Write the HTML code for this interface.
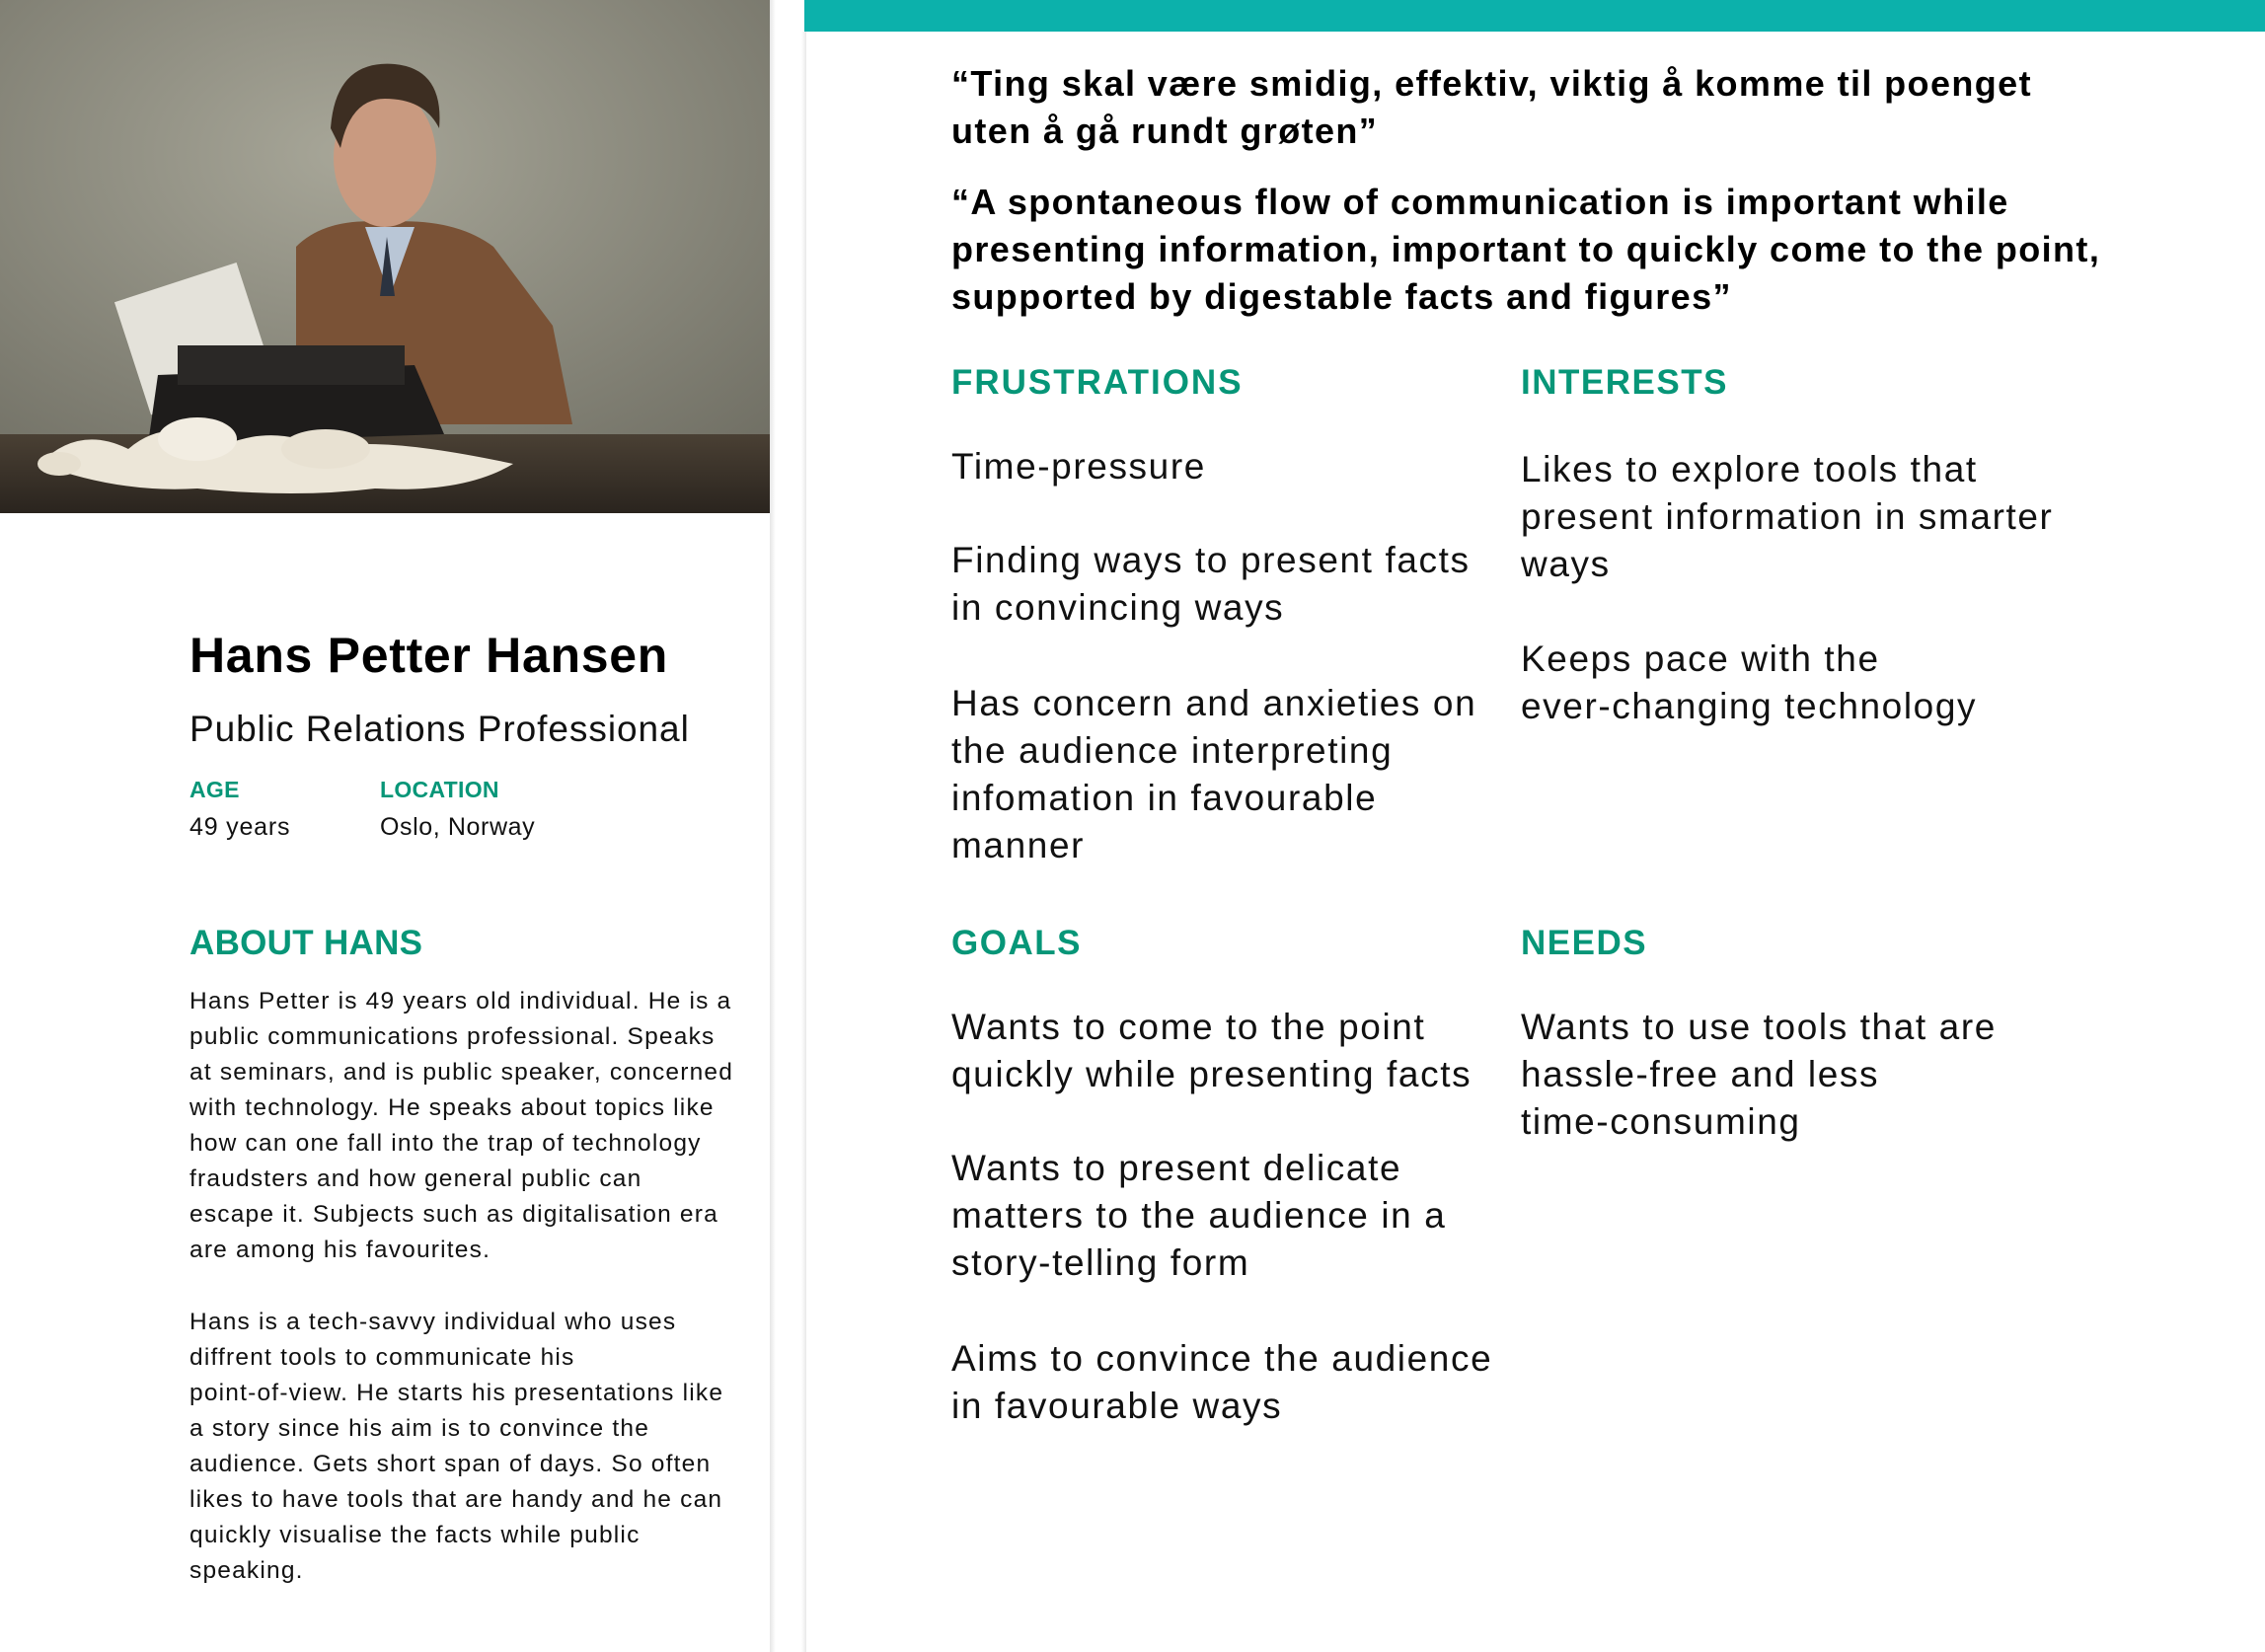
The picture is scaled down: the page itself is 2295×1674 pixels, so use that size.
<!DOCTYPE html>
<html><head><meta charset="utf-8"><style>
*{margin:0;padding:0;box-sizing:border-box}
body{width:2295px;height:1674px;background:#fff;position:relative;overflow:hidden;font-family:"Liberation Sans",sans-serif;color:#111}
.l{position:absolute;white-space:nowrap}
.shadow{position:absolute;left:780px;top:0;width:6px;height:1674px;background:linear-gradient(90deg,#e6e6e6,#fff)}
.shadow2{position:absolute;left:812px;top:32px;width:5px;height:1642px;background:linear-gradient(90deg,#fff,#e8e8e8)}
.bar{position:absolute;left:815px;top:0;width:1480px;height:32px;background:#0cb1ab}
.h{color:#079678;font-weight:bold;font-size:35px;line-height:40px;letter-spacing:0.3px}
.q{font-weight:bold;font-size:36px;line-height:48px;color:#000;letter-spacing:1.4px}
.it{font-size:37px;line-height:48px;color:#111;letter-spacing:1.6px}
.b{font-size:24.5px;line-height:36px;color:#111;letter-spacing:1.2px}
</style></head><body>
<svg class="l" style="left:0;top:0" width="780" height="520" viewBox="0 0 780 520">
<defs><radialGradient id="bg" cx="0.45" cy="0.3" r="0.8"><stop offset="0" stop-color="#a7a698"/><stop offset="1" stop-color="#6f6e63"/></radialGradient>
<linearGradient id="tb" x1="0" y1="0" x2="0" y2="1"><stop offset="0" stop-color="#4a4034"/><stop offset="1" stop-color="#2a241e"/></linearGradient></defs>
<rect width="780" height="520" fill="url(#bg)"/>
<rect y="440" width="780" height="80" fill="url(#tb)"/>
<path d="M300 250 Q330 220 390 225 Q460 220 500 250 L560 330 L580 430 L300 430 Z" fill="#7a5236"/>
<path d="M370 230 L395 300 L420 230 Z" fill="#b9c6d6"/>
<path d="M392 240 L385 300 L400 300 Z" fill="#2b3340"/>
<ellipse cx="390" cy="160" rx="52" ry="70" fill="#c99a80"/>
<path d="M335 130 Q340 60 400 65 Q450 70 445 130 Q430 100 390 100 Q355 100 345 150 Z" fill="#3d2e22"/>
<rect x="130" y="285" width="130" height="120" fill="#e4e2da" transform="rotate(-18 190 340)"/>
<path d="M160 380 L420 370 L450 440 L150 450 Z" fill="#1e1c1b"/>
<rect x="180" y="350" width="230" height="40" fill="#2a2826"/>
<path d="M40 470 Q80 430 130 455 Q170 420 230 450 Q280 430 330 455 Q380 440 520 470 Q470 500 380 495 Q300 505 200 495 Q120 500 40 470Z" fill="#ece6d8"/>
<ellipse cx="200" cy="445" rx="40" ry="22" fill="#f2ede2"/>
<ellipse cx="330" cy="455" rx="45" ry="20" fill="#e8e1d2"/>
<ellipse cx="60" cy="470" rx="22" ry="12" fill="#e6dfcf"/>
</svg>
<div class="shadow"></div><div class="shadow2"></div><div class="bar"></div>

<div class="l" style="left:192px;top:634px;font-size:50px;font-weight:bold;line-height:60px;color:#000;letter-spacing:0.7px">Hans Petter Hansen</div>
<div class="l" style="left:192px;top:717px;font-size:37px;line-height:44px;letter-spacing:0.95px">Public Relations Professional</div>
<div class="l h" style="left:192px;top:786px;font-size:23px;line-height:28px">AGE</div>
<div class="l h" style="left:385px;top:786px;font-size:23px;line-height:28px">LOCATION</div>
<div class="l" style="left:192px;top:823px;font-size:25px;line-height:30px;letter-spacing:0.8px">49 years</div>
<div class="l" style="left:385px;top:823px;font-size:25px;line-height:30px;letter-spacing:0.6px">Oslo, Norway</div>
<div class="l h" style="left:192px;top:936px">ABOUT HANS</div>
<div class="l b" style="left:192px;top:997px">Hans Petter is 49 years old individual. He is a<br>public communications professional. Speaks<br>at seminars, and is public speaker, concerned<br>with technology. He speaks about topics like<br>how can one fall into the trap of technology<br>fraudsters and how general public can<br>escape it. Subjects such as digitalisation era<br>are among his favourites.</div>
<div class="l b" style="left:192px;top:1322px">Hans is a tech-savvy individual who uses<br>diffrent tools to communicate his<br>point-of-view. He starts his presentations like<br>a story since his aim is to convince the<br>audience. Gets short span of days. So often<br>likes to have tools that are handy and he can<br>quickly visualise the facts while public<br>speaking.</div>

<div class="l q" style="left:964px;top:61px">“Ting skal være smidig, effektiv, viktig å komme til poenget<br>uten å gå rundt grøten”</div>
<div class="l q" style="left:964px;top:181px">“A spontaneous flow of communication is important while<br>presenting information, important to quickly come to the point,<br>supported by digestable facts and figures”</div>

<div class="l h" style="left:964px;top:368px;letter-spacing:2px">FRUSTRATIONS</div>
<div class="l h" style="left:1541px;top:368px;letter-spacing:1.5px">INTERESTS</div>
<div class="l it" style="left:964px;top:449px">Time-pressure</div>
<div class="l it" style="left:964px;top:544px">Finding ways to present facts<br>in convincing ways</div>
<div class="l it" style="left:964px;top:689px">Has concern and anxieties on<br>the audience interpreting<br>infomation in favourable<br>manner</div>
<div class="l it" style="left:1541px;top:452px">Likes to explore tools that<br>present information in smarter<br>ways</div>
<div class="l it" style="left:1541px;top:644px">Keeps pace with the<br>ever-changing technology</div>

<div class="l h" style="left:964px;top:936px;letter-spacing:1.5px">GOALS</div>
<div class="l h" style="left:1541px;top:936px;letter-spacing:1.5px">NEEDS</div>
<div class="l it" style="left:964px;top:1017px">Wants to come to the point<br>quickly while presenting facts</div>
<div class="l it" style="left:964px;top:1160px">Wants to present delicate<br>matters to the audience in a<br>story-telling form</div>
<div class="l it" style="left:964px;top:1353px">Aims to convince the audience<br>in favourable ways</div>
<div class="l it" style="left:1541px;top:1017px">Wants to use tools that are<br>hassle-free and less<br>time-consuming</div>
</body></html>
